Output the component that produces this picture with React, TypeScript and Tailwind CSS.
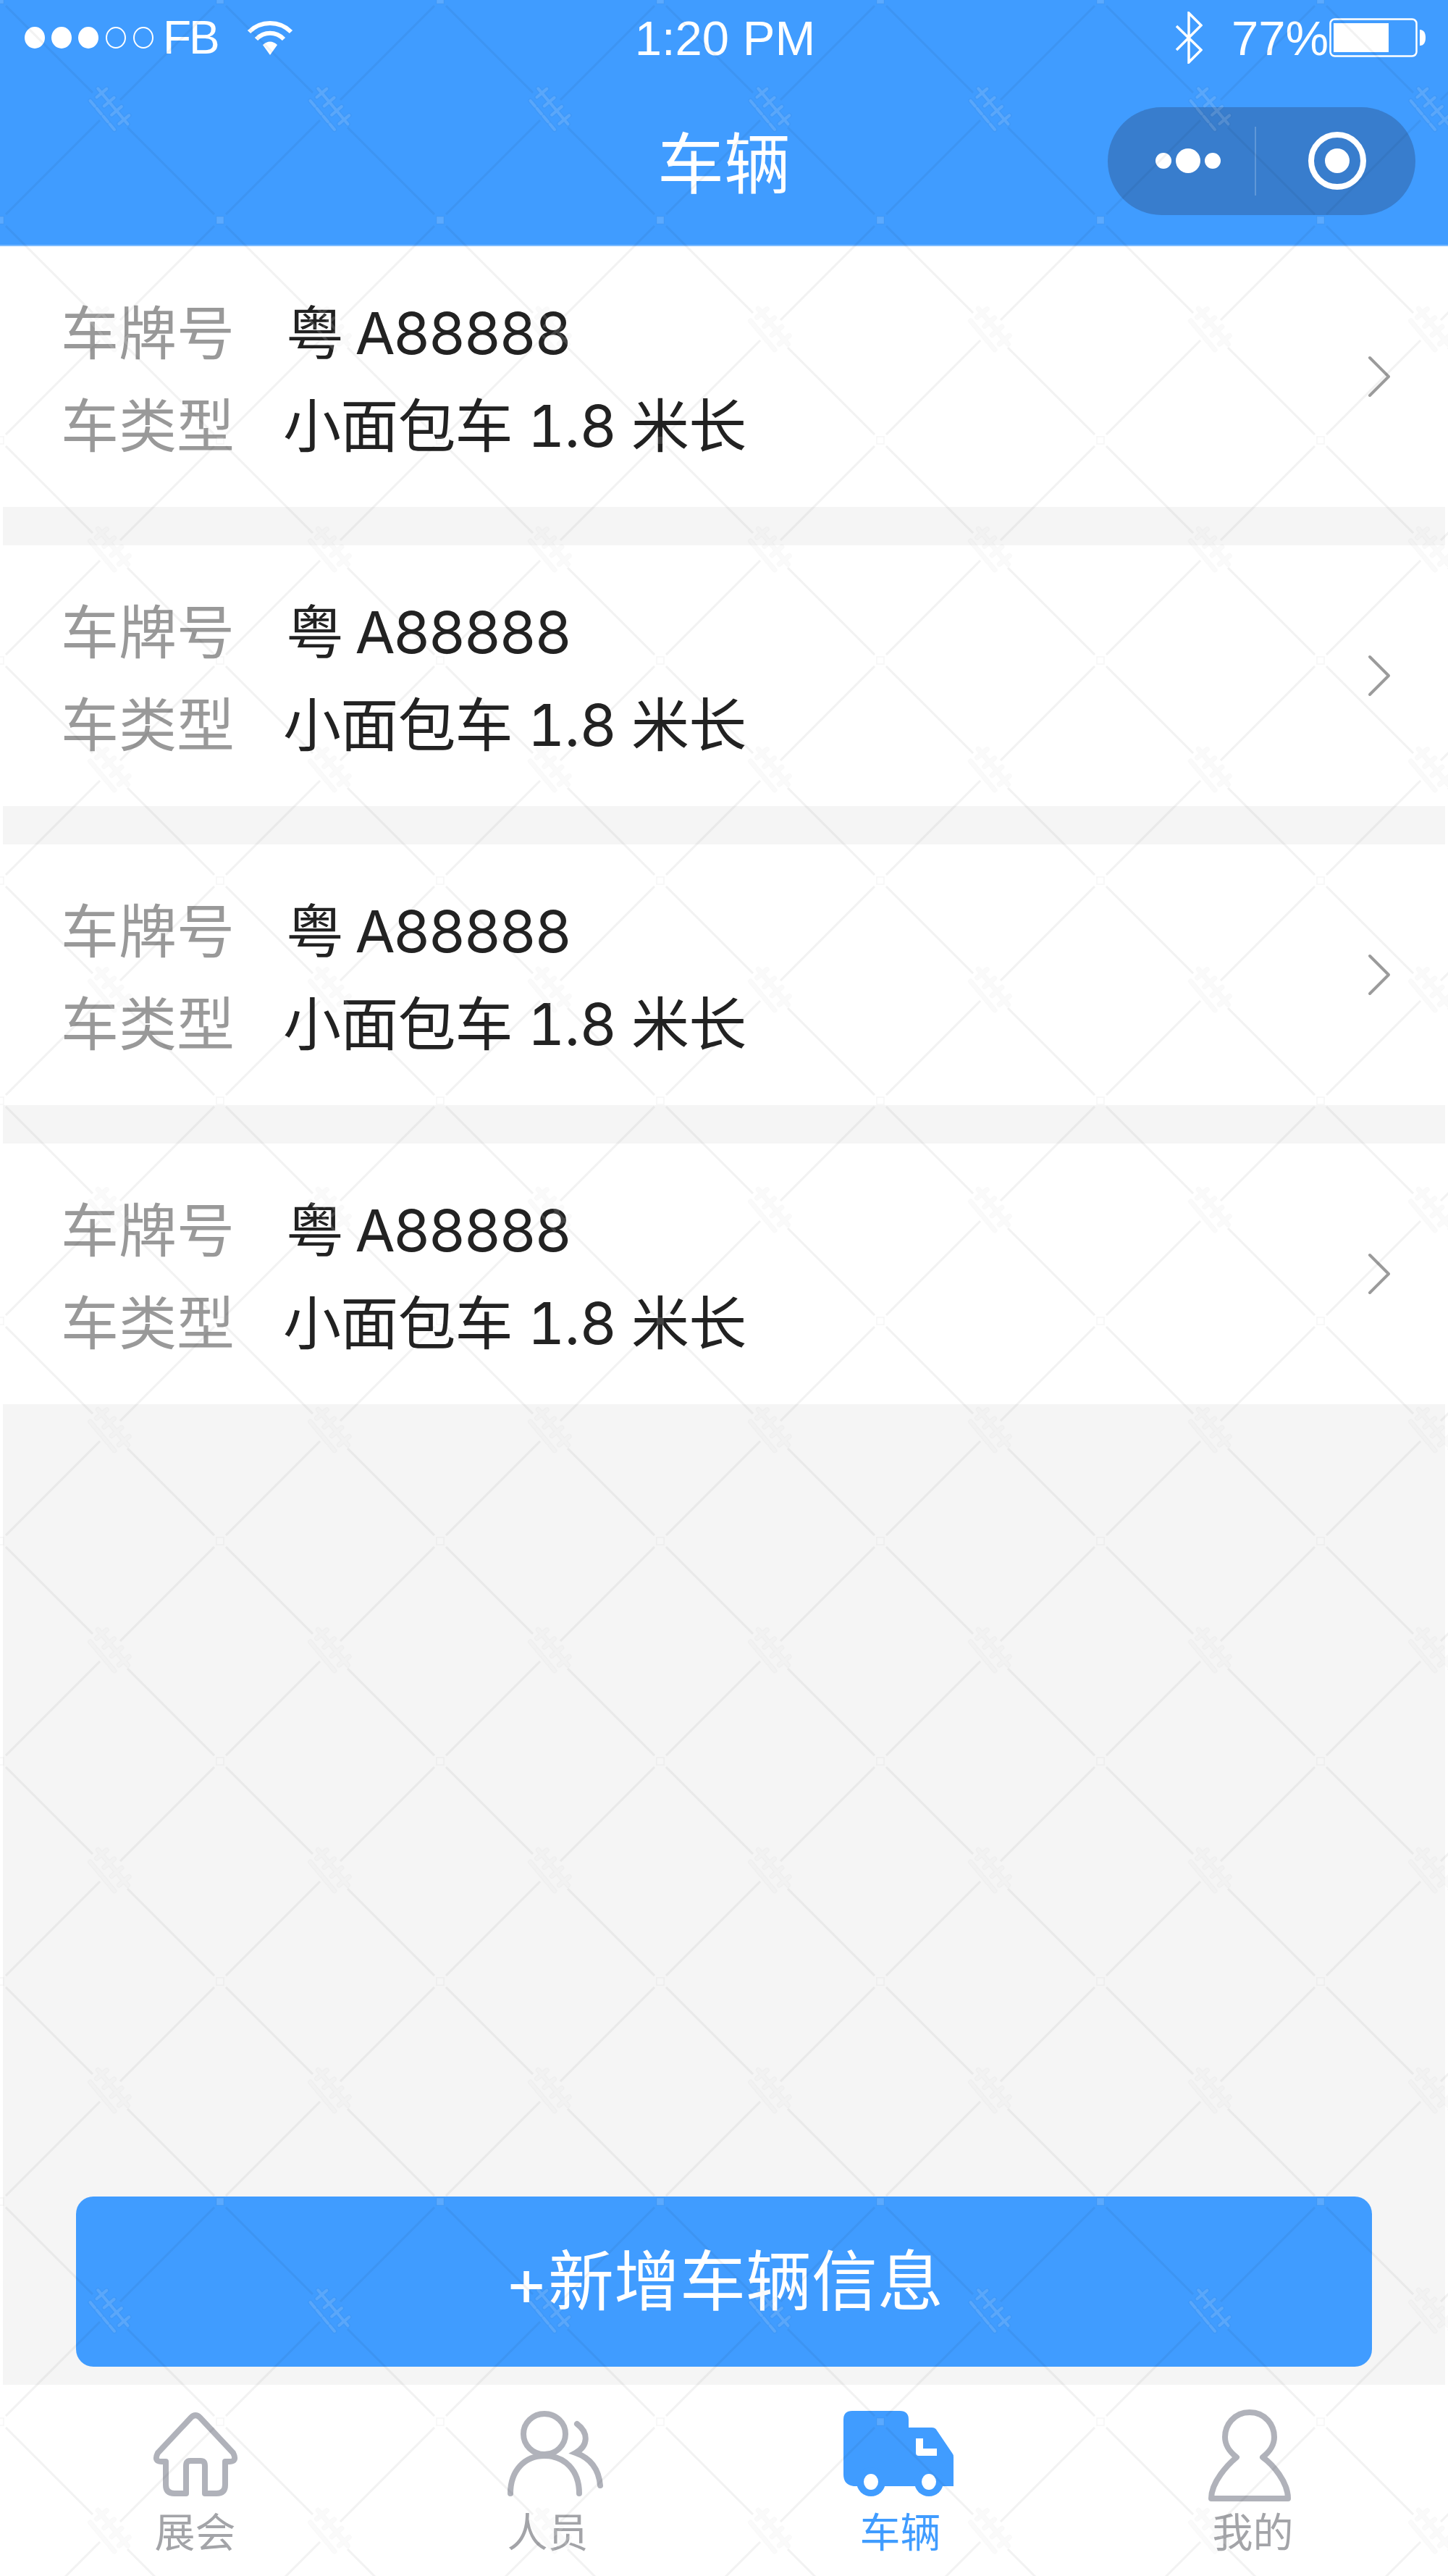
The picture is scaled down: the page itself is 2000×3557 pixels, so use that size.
const SANS = 'font-["Inter","Noto_Sans_CJK_SC",sans-serif]';

const vehicles = [
  { id: 1, plate: "粤 A88888", type: "小面包车 1.8 米长" },
  { id: 2, plate: "粤 A88888", type: "小面包车 1.8 米长" },
  { id: 3, plate: "粤 A88888", type: "小面包车 1.8 米长" },
  { id: 4, plate: "粤 A88888", type: "小面包车 1.8 米长" },
];

function SignalDots() {
  return (
    <svg width="180" height="34" viewBox="0 0 180 34" fill="none">
      <ellipse cx="15" cy="17" rx="14" ry="15" fill="#fff" />
      <ellipse cx="52" cy="17" rx="14" ry="15" fill="#fff" />
      <ellipse cx="89" cy="17" rx="14" ry="15" fill="#fff" />
      <ellipse cx="127" cy="17" rx="13" ry="14" stroke="#fff" strokeWidth="2" />
      <ellipse cx="165" cy="17" rx="13" ry="14" stroke="#fff" strokeWidth="2" />
    </svg>
  );
}

function WifiIcon() {
  return (
    <svg width="64" height="50" viewBox="0 0 64 50" fill="none" stroke="#fff" strokeWidth="6">
      <path d="M3 17C19 1 45 1 61 17" />
      <path d="M13 27C24 16 40 16 51 27" />
      <path d="M22 35L32 49L42 35C36 29 28 29 22 35Z" fill="#fff" stroke="none" />
    </svg>
  );
}

function BluetoothIcon() {
  return (
    <svg width="38" height="72" viewBox="0 0 38 72" fill="none" stroke="#fff" strokeWidth="3.5">
      <path d="M2 20L36 53L19 70V2L36 19L2 53" />
    </svg>
  );
}

function BatteryIcon() {
  return (
    <svg width="134" height="54" viewBox="0 0 134 54" fill="none">
      <rect x="1.5" y="1.5" width="119" height="51" rx="6" stroke="#fff" strokeWidth="2.5" />
      <rect x="6" y="7" width="76" height="40" fill="#fff" />
      <path d="M125 16C131 16 133 21 133 27C133 33 131 38 125 38Z" fill="#fff" />
    </svg>
  );
}

function Chevron() {
  return (
    <svg width="34" height="60" viewBox="0 0 34 60" fill="none" stroke="#9b9b9b" strokeWidth="4" strokeLinecap="round" strokeLinejoin="round">
      <path d="M4 4L30 30L4 56" />
    </svg>
  );
}

function HomeIcon() {
  return (
    <svg width="118" height="128" viewBox="0 -4 118 128" fill="none" stroke="#b0b2ba" strokeWidth="8" strokeLinejoin="round">
      <path d="M53 7Q59 1 65 7L111 56Q117 68 106 68L100 68L100 100Q100 112 88 112L72 112L72 74Q72 67 66 67L52 67Q46 67 46 74L46 112L30 112Q18 112 18 100L18 68L12 68Q1 68 7 56Z" />
    </svg>
  );
}

function PeopleIcon() {
  return (
    <svg width="153" height="128" viewBox="-20 -2 153 128" fill="none" stroke="#b0b2ba" strokeWidth="8" strokeLinecap="round">
      <ellipse cx="52" cy="32" rx="29" ry="28" />
      <path d="M5 114C5 82 25 62 52 62C80 62 100 82 100 114" />
      <path d="M97 18C113 30 113 48 95 58C115 65 127 80 129 103" />
    </svg>
  );
}

function TruckIcon() {
  return (
    <svg width="158" height="128" viewBox="0 -2 158 128">
      <path
        d="M12 0H78Q90 0 90 12V23H122Q127 23 129 27L150 58Q152 60 152 64V104H14Q0 102 0 88V12Q0 0 12 0Z"
        fill="#409cff"
      />
      <path d="M100 38H110V52H129V62H104Q100 62 100 58Z" fill="#fff" />
      <circle cx="38" cy="98" r="20" fill="#409cff" />
      <circle cx="118" cy="98" r="20" fill="#409cff" />
      <ellipse cx="38" cy="98" rx="10" ry="11" fill="#fff" />
      <ellipse cx="118" cy="98" rx="10" ry="11" fill="#fff" />
    </svg>
  );
}

function PersonIcon() {
  return (
    <svg width="126" height="128" viewBox="0 0 126 128" fill="none" stroke="#b0b2ba" strokeWidth="8" strokeLinejoin="round">
      <path d="M58 4C36 4 24 22 24 38C24 50 30 58 40 66C28 76 5 100 5 123H111C111 100 90 76 76 66C86 58 92 50 92 38C92 22 80 4 58 4Z" />
    </svg>
  );
}

function VehicleRow({ plate, type }: { plate: string; type: string }) {
  return (
    <div className="flex h-[360px] items-center justify-between bg-white pl-[84px] pr-[78px]">
      <div className="pt-[8px] text-[80px] leading-[128px] tabular-nums">
        <div className="flex">
          <span className="w-[307px] text-[#999999]">车牌号</span>
          <span className="ml-[4px] tracking-[-3px] text-[#222222]">{plate}</span>
        </div>
        <div className="flex">
          <span className="w-[307px] text-[#999999]">车类型</span>
          <span className="tracking-[-0.8px] text-[#222222]">{type}</span>
        </div>
      </div>
      <Chevron />
    </div>
  );
}

const tabs = [
  { label: "展会", icon: <HomeIcon />, active: false },
  { label: "人员", icon: <PeopleIcon />, active: false },
  { label: "车辆", icon: <TruckIcon />, active: true },
  { label: "我的", icon: <PersonIcon />, active: false },
];

// Repeating diamond mesh laid over the whole page
function MeshOverlay() {
  const line = "rgba(0,0,0,0.05)";
  const inner = "rgba(255,255,255,0.14)";
  const dashes = "M-32 -5H32M-24 -14V4M-8 -14V4M8 -14V4M24 -14V4M-26 14H-16M-12 14H-2M2 14H12M16 14H26";
  return (
    <svg className="pointer-events-none absolute inset-0" width="2000" height="3557">
      <defs>
        <pattern id="mesh" width="304" height="304" patternUnits="userSpaceOnUse">
          <g stroke={line} strokeWidth="3" fill="none">
            <path d="M8 8L128 128" />
            <path d="M176 176L296 296" />
            <path d="M296 8L166 138" />
            <path d="M8 296L138 166" />
          </g>
          <g fill={inner} stroke="rgba(0,0,0,0.035)" strokeWidth="1.5">
            <rect x="-5" y="-5" width="10" height="10" />
            <rect x="299" y="-5" width="10" height="10" />
            <rect x="-5" y="299" width="10" height="10" />
            <rect x="299" y="299" width="10" height="10" />
          </g>
          <g transform="translate(152 150) rotate(50)" fill="none" strokeLinecap="round">
            <path d={dashes} stroke="rgba(0,0,0,0.025)" strokeWidth="7" />
            <path d={dashes} stroke={inner} strokeWidth="4" />
          </g>
        </pattern>
      </defs>
      <rect width="2000" height="3557" fill="url(#mesh)" />
    </svg>
  );
}

export default function App() {
  return (
    <div className={`relative flex h-[3557px] w-[2000px] flex-col overflow-hidden bg-white ${SANS}`}>
      <header className="h-[340px] shrink-0 border-b-[2px] border-[#7dbbff] bg-[#409cff] text-white">
        <div className="grid h-[104px] grid-cols-[1fr_auto_1fr] items-center pl-[33px] pr-[30px]">
          <div className="flex items-center">
            <SignalDots />
            <span className="ml-[12px] font-['Liberation_Sans',sans-serif] text-[64px] leading-none tracking-[-3px]">FB</span>
            <span className="ml-[40px]">
              <WifiIcon />
            </span>
          </div>
          <span className="font-['Liberation_Sans',sans-serif] text-[67px] leading-none">1:20 PM</span>
          <div className="flex items-center justify-end">
            <BluetoothIcon />
            <span className="ml-[40px] font-['Liberation_Sans',sans-serif] text-[67px] leading-none">77%</span>
            <span className="ml-[1px]">
              <BatteryIcon />
            </span>
          </div>
        </div>
        <div className="grid h-[236px] grid-cols-[1fr_auto_1fr] items-center">
          <span />
          <h1 className="pt-[10px] text-[92px] font-normal leading-none">车辆</h1>
          <div className="flex justify-end pr-[45px]">
            <div className="flex h-[149px] w-[425px] items-center rounded-full bg-[#387dcd]">
              <div className="flex w-[203px] items-center justify-end gap-[6px] pr-[47px]">
                <span className="h-[22px] w-[22px] rounded-full bg-white" />
                <span className="h-[34px] w-[34px] rounded-full bg-white" />
                <span className="h-[22px] w-[22px] rounded-full bg-white" />
              </div>
              <span className="h-[95px] w-[2px] bg-white/20" />
              <div className="flex flex-1 justify-center pl-[4px]">
                <span className="flex h-[80px] w-[80px] items-center justify-center rounded-full border-[8px] border-white">
                  <span className="h-[34px] w-[34px] rounded-full bg-white" />
                </span>
              </div>
            </div>
          </div>
        </div>
      </header>

      <main className="mx-[4px] flex flex-1 flex-col bg-[#f5f5f5]">
        <div className="-mx-[4px] flex flex-col gap-[53px]">
          {vehicles.map((v) => (
            <VehicleRow key={v.id} plate={v.plate} type={v.type} />
          ))}
        </div>
        <div className="mt-auto px-[101px] pb-[25px]">
          <button className="flex h-[235px] w-full items-center justify-center rounded-[24px] bg-[#409cff] text-[91px] leading-none text-white">
            +新增车辆信息
          </button>
        </div>
      </main>

      <nav className="grid h-[264px] shrink-0 grid-cols-4 bg-white px-[26px] pt-[34px]">
        {tabs.map((t) => (
          <div key={t.label} className="flex flex-col items-center">
            <div className="flex h-[128px] items-start">{t.icon}</div>
            <span className={`mt-[10px] text-[56px] leading-[64px] ${t.active ? "text-[#409cff]" : "text-[#a3a4a8]"}`}>
              {t.label}
            </span>
          </div>
        ))}
      </nav>

      <MeshOverlay />
    </div>
  );
}
